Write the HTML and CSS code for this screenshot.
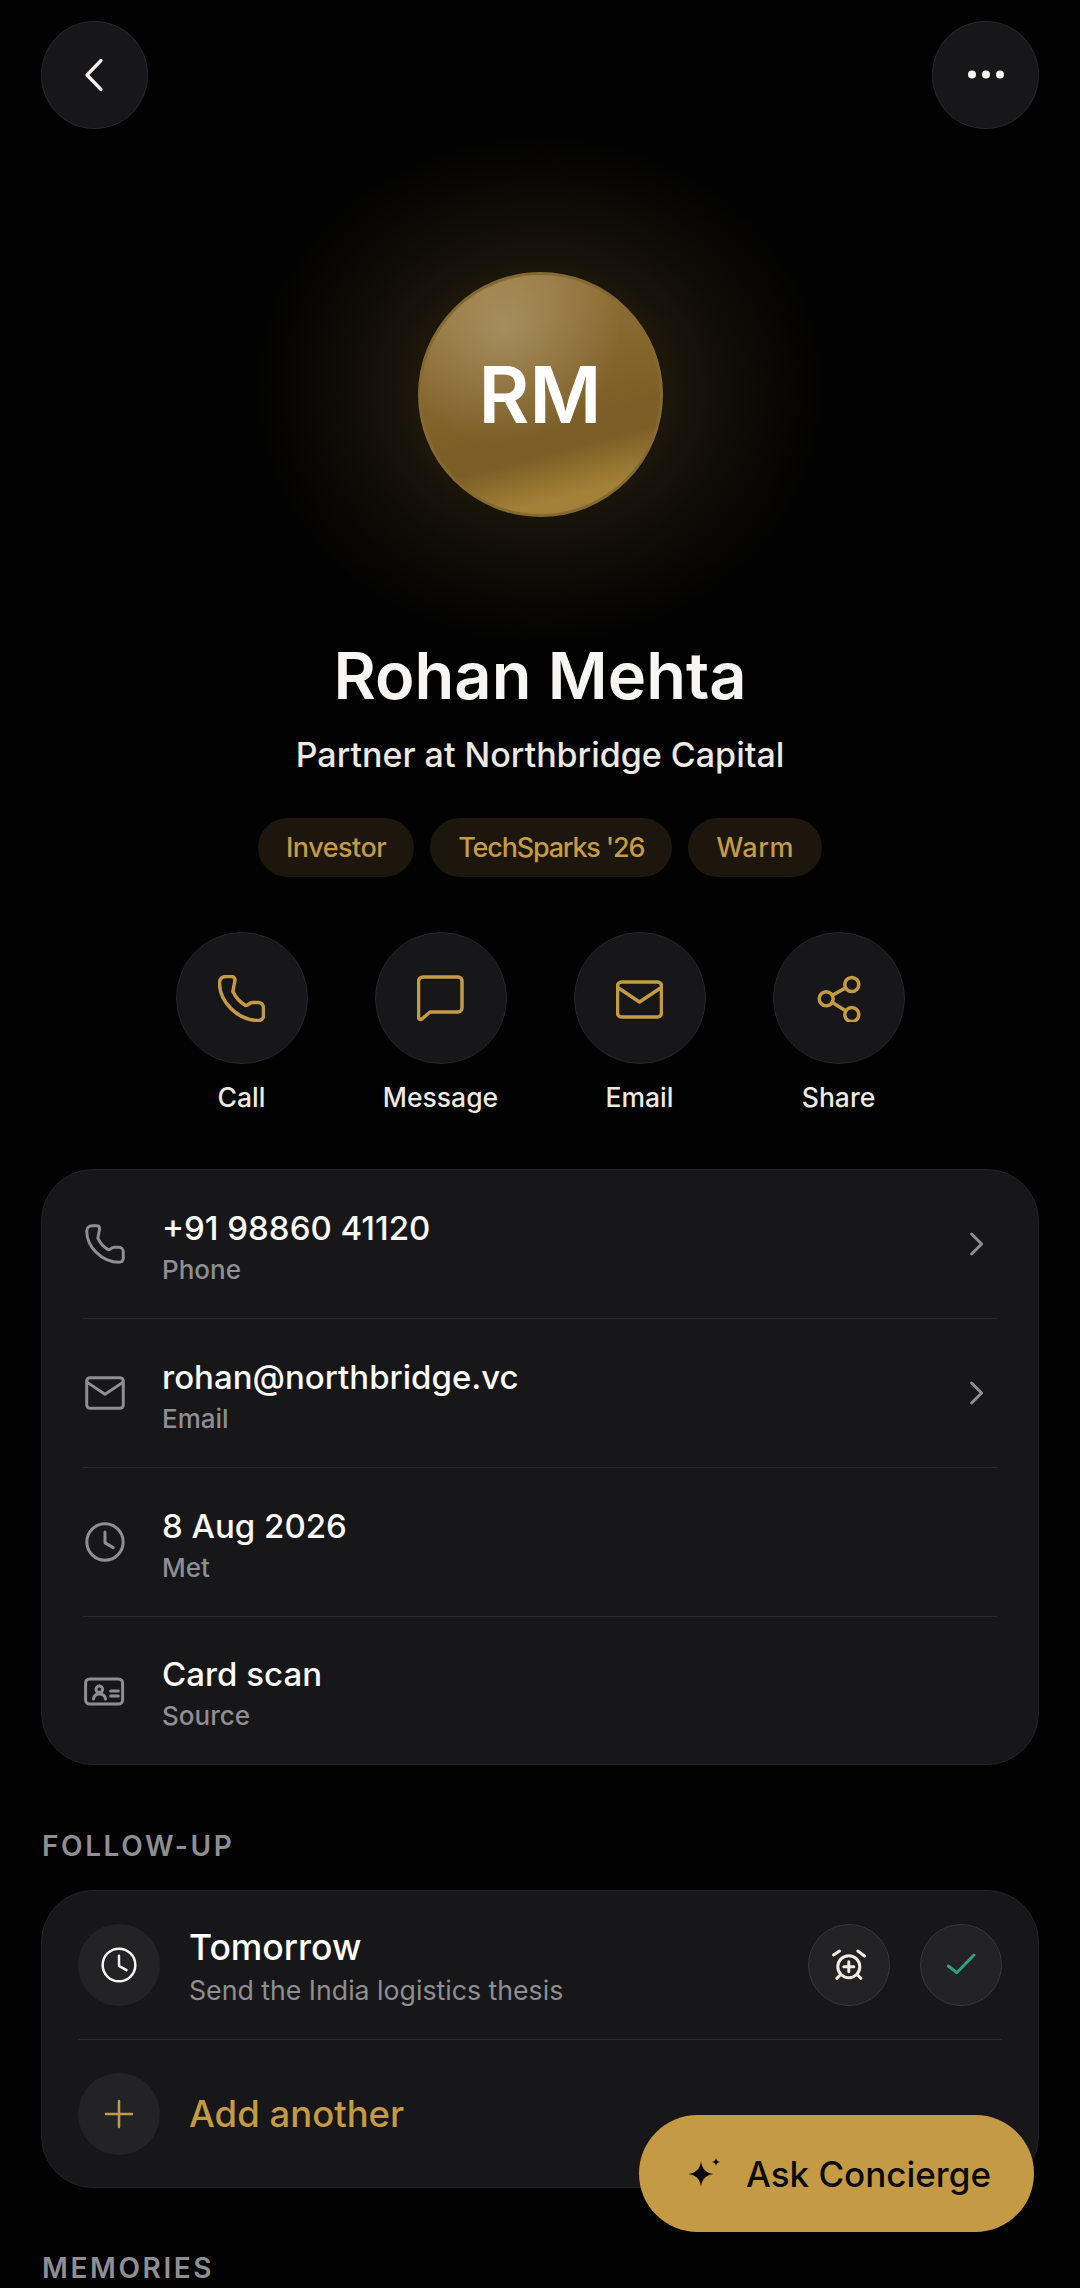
FILE: index.html
```html
<!DOCTYPE html>
<html lang="en">
<head>
  <meta charset="UTF-8" />
  <meta name="viewport" content="width=device-width, initial-scale=1.0"/>
  <title>Rohan Mehta</title>
  <link rel="stylesheet" href="styles.css">
</head>
<body>
  <div class="screen">

    <!-- Top bar -->
    <div class="topbar">
      <button class="round-btn">
        <svg width="44" height="44" viewBox="0 0 44 44" class="ico" stroke="#f5f3ee" stroke-width="3.300"><path d="M28 7.500L14 22l14 14.500"/></svg>
      </button>
      <button class="round-btn">
        <svg width="44" height="44" viewBox="0 0 44 44" fill="#f5f3ee"><circle cx="8" cy="21.500" r="4"/><circle cx="22" cy="21.500" r="4"/><circle cx="36" cy="21.500" r="4"/></svg>
      </button>
    </div>

    <!-- Profile -->
    <div class="profile">
      <div class="glow"></div>
      <div class="avatar">RM</div>
      <h1 class="name">Rohan Mehta</h1>
      <div class="role">Partner at Northbridge Capital</div>
      <div class="chips">
        <span class="chip">Investor</span>
        <span class="chip chip-wide">TechSparks '26</span>
        <span class="chip chip-warm">Warm</span>
      </div>
    </div>

    <!-- Quick actions -->
    <div class="actions">
      <div class="action">
        <div class="action-circle">
          <svg width="47" height="47" viewBox="0 0 47 47" class="ico" stroke="#c49a45" stroke-width="3.500"><path d="M1.500 8C1.500 4 4 1.500 8 1.500h5.500c2 0 3.500 1.500 3.500 3.500l-2 11q-.5 0 .5 1.500c2.500 5.500 6.500 9.500 12 13q2 0 3.500-1.500 1.500-1.500 4-1.500h5c3.500 0 5.500 2.500 5.500 5.500v7.500c0 3-2 5-5 5C20 45.500 1.500 27 1.500 8z"/></svg>
        </div>
        <div class="action-label">Call</div>
      </div>
      <div class="action">
        <div class="action-circle">
          <svg width="47" height="47" viewBox="0 0 47 47" class="ico" stroke="#c49a45" stroke-width="3.500"><path d="M6 2h35a4 4 0 0 1 4 4v27a4 4 0 0 1-4 4H13l-7.500 6.500C4 45 1.500 44.500 1.500 42V6.500A4.500 4.500 0 0 1 6 2z"/></svg>
        </div>
        <div class="action-label">Message</div>
      </div>
      <div class="action">
        <div class="action-circle">
          <svg width="47" height="47" viewBox="0 0 47 47" class="ico" stroke="#c49a45" stroke-width="3.500"><rect x="1.500" y="7" width="44" height="35" rx="4"/><path d="M2.500 13l21 14 21-14"/></svg>
        </div>
        <div class="action-label">Email</div>
      </div>
      <div class="action">
        <div class="action-circle">
          <svg width="47" height="47" viewBox="0 0 47 47" class="ico" stroke="#c49a45" stroke-width="3.500"><circle cx="36.800" cy="9.500" r="7"/><circle cx="11.200" cy="23.700" r="7"/><circle cx="36.800" cy="39.500" r="7"/><path d="M17.300 20.300l13.400-7.400M17.300 27.400l13.400 8.400"/></svg>
        </div>
        <div class="action-label">Share</div>
      </div>
    </div>

    <!-- Details -->
    <div class="card details">
      <div class="row">
        <svg width="44" height="44" viewBox="-3 -3 53 53" class="ico" stroke="#8e8e93" stroke-width="3.600"><path d="M1.500 8C1.500 4 4 1.500 8 1.500h5.500c2 0 3.500 1.500 3.500 3.500l-2 11q-.5 0 .5 1.500c2.500 5.500 6.500 9.500 12 13q2 0 3.500-1.500 1.500-1.500 4-1.500h5c3.500 0 5.500 2.500 5.500 5.500v7.500c0 3-2 5-5 5C20 45.500 1.500 27 1.500 8z"/></svg>
        <div class="row-text">
          <div class="row-title">+91 98860 41120</div>
          <div class="row-label">Phone</div>
        </div>
        <svg class="ico chev" width="30" height="30" viewBox="0 0 24 24" stroke="#8e8e93" stroke-width="2.400"><path d="M8.500 4l8 8-8 8"/></svg>
      </div>
      <div class="row">
        <svg width="44" height="44" viewBox="-3 -3 53 53" class="ico" stroke="#8e8e93" stroke-width="3.600"><rect x="1.500" y="5" width="44" height="37" rx="4"/><path d="M2.500 11l21 14 21-14"/></svg>
        <div class="row-text">
          <div class="row-title">rohan@northbridge.vc</div>
          <div class="row-label">Email</div>
        </div>
        <svg class="ico chev" width="30" height="30" viewBox="0 0 24 24" stroke="#8e8e93" stroke-width="2.400"><path d="M8.500 4l8 8-8 8"/></svg>
      </div>
      <div class="row">
        <svg width="44" height="44" viewBox="0 0 24 24" class="ico" stroke="#8e8e93" stroke-width="1.650"><circle cx="12" cy="12" r="9.900"/><path d="M12 6.500v6l4.500 2.600"/></svg>
        <div class="row-text">
          <div class="row-title">8 Aug 2026</div>
          <div class="row-label">Met</div>
        </div>
      </div>
      <div class="row">
        <svg width="44" height="44" viewBox="0 0 44 44" class="ico" stroke="#8e8e93" stroke-width="3"><rect x="2.600" y="10" width="37" height="25" rx="4"/><circle cx="16.300" cy="20.300" r="3.300"/><path d="M10.500 30c.5-3.500 3-5 6-5s5.500 1.500 6 5M27.700 22h7.600M27.700 27h7.600"/></svg>
        <div class="row-text">
          <div class="row-title">Card scan</div>
          <div class="row-label">Source</div>
        </div>
      </div>
    </div>

    <div class="section-title">FOLLOW-UP</div>

    <div class="card followup">
      <div class="fu-row fu-first">
        <div class="fu-icon">
          <svg width="40" height="40" viewBox="0 0 24 24" class="ico" stroke="#f5f3ee" stroke-width="1.500"><circle cx="12" cy="12" r="9.800"/><path d="M12 6.500v6l4.500 2.600"/></svg>
        </div>
        <div class="row-text">
          <div class="fu-title">Tomorrow</div>
          <div class="fu-sub">Send the India logistics thesis</div>
        </div>
        <div class="fu-btn">
          <svg width="36" height="36" viewBox="0 0 36 36" class="ico" stroke="#f0ece0" stroke-width="3"><circle cx="17.800" cy="19.700" r="11"/><path d="M17.800 14.700v10M12.800 19.700h10M2.500 8l6-4M26.800 4l6.700 5M5.800 31.300L9.200 28M30 31.300L26.500 28"/></svg>
        </div>
        <div class="fu-btn">
          <svg width="36" height="36" viewBox="0 0 36 36" class="ico" stroke="#2fa27a" stroke-width="3"><path d="M5.300 19l8.400 6.700L31 8"/></svg>
        </div>
      </div>
      <div class="fu-row">
        <div class="fu-icon">
          <svg width="32" height="32" viewBox="0 0 24 24" class="ico" stroke="#c49a45" stroke-width="1.900"><path d="M12 2.250v19.500M2.250 12h19.500"/></svg>
        </div>
        <div class="add-label">Add another</div>
      </div>
    </div>

    <div class="section-title memories">MEMORIES</div>

    <!-- Floating button -->
    <button class="fab">
      <svg width="56" height="56" viewBox="0 0 56 56" fill="#0a0a0a"><path d="M28 15.300C29 23 33 27 40.700 28 33 29 29 33 28 40.700 27 33 23 29 15.300 28 23 27 27 23 28 15.300z"/><path d="M43 12c.4 2.500 1.500 3.600 4 4-2.500.4-3.600 1.500-4 4-.4-2.500-1.500-3.600-4-4 2.500-.4 3.600-1.500 4-4z"/></svg>
      <span>Ask Concierge</span>
    </button>

  </div>
</body>
</html>
```

FILE: styles.css
```css
* { box-sizing: border-box; }
body {
  margin: 0;
  padding: 0;
  background: #020202;
  font-family: 'Inter', 'Noto Sans', sans-serif;
  color: #f5f3ee;
}
button {
  font-family: inherit;
  border: none;
  cursor: pointer;
}
.ico {
  fill: none;
  stroke-linecap: round;
  stroke-linejoin: round;
  display: block;
  flex-shrink: 0;
}

.screen {
  position: relative;
  width: 1080px;
  height: 2288px;
  overflow: hidden;
  padding: 21px 41px 0;
}

.topbar {
  position: relative;
  z-index: 1;
  display: flex;
  justify-content: space-between;
}
.round-btn {
  width: 107px;
  height: 108px;
  padding: 0;
  border-radius: 50%;
  background: #17171a;
  border: 1px solid #26262a;
  display: flex;
  align-items: center;
  justify-content: center;
}

.profile {
  position: relative;
  display: flex;
  flex-direction: column;
  align-items: center;
  padding-top: 143px;
}
.glow {
  position: absolute;
  left: 50%;
  top: 6px;
  width: 570px;
  height: 510px;
  margin-left: -285px;
  background: radial-gradient(closest-side, rgba(196, 154, 69, 0.15) 40%, rgba(196, 154, 69, 0.07) 68%, rgba(196, 154, 69, 0) 100%);
}
.avatar {
  position: relative;
  width: 245px;
  height: 245px;
  border-radius: 50%;
  border: 3px solid #846a32;
  background:
    radial-gradient(circle at 35% 22%, rgba(255, 255, 255, 0.22), rgba(255, 255, 255, 0) 48%),
    linear-gradient(165deg, #98773a 0%, #7c5e26 62%, #7c5e26 70%, #a28238 86%, #a08035 100%);
  display: flex;
  align-items: center;
  justify-content: center;
  font-size: 78px;
  font-weight: 600;
  color: #fff;
}
.name {
  position: relative;
  margin: 120px 0 0;
  font-size: 65px;
  line-height: 78px;
  font-weight: 600;
  color: #f8f6f2;
}
.role {
  position: relative;
  margin-top: 20px;
  font-size: 34px;
  line-height: 40px;
  font-weight: 500;
  color: #ece9e2;
}
.chips {
  display: flex;
  gap: 16px;
  margin-top: 43px;
}
.chip {
  height: 59px;
  padding: 0 28px;
  border-radius: 30px;
  background: #1c160c;
  color: #c49a45;
  font-size: 27px;
  font-weight: 500;
  letter-spacing: -0.5px;
  display: flex;
  align-items: center;
}
.chip-wide { letter-spacing: -1.2px; }
.chip-warm { letter-spacing: 0.5px; }

.actions {
  display: flex;
  justify-content: center;
  gap: 67px;
  margin-top: 55px;
}
.action {
  width: 132px;
  display: flex;
  flex-direction: column;
  align-items: center;
}
.action-circle {
  width: 132px;
  height: 132px;
  border-radius: 50%;
  background: #17171a;
  border: 1px solid #26262a;
  display: flex;
  align-items: center;
  justify-content: center;
}
.action-label {
  margin-top: 16px;
  font-size: 26.5px;
  line-height: 34px;
  font-weight: 500;
  color: #ece9e2;
  white-space: nowrap;
}

.card {
  background: #17171a;
  border: 1px solid #232327;
  border-radius: 52px;
}
.details {
  margin-top: 55px;
  padding: 0 41px;
}
.row {
  height: 149px;
  display: flex;
  align-items: center;
  border-bottom: 1px solid #2a2a2e;
}
.row:last-child {
  height: 147px;
  border-bottom: none;
}
.row-text {
  flex: 1;
  min-width: 0;
  margin-left: 35px;
  padding-top: 4px;
}
.row-title {
  font-size: 33px;
  line-height: 42px;
  font-weight: 550;
  color: #fbfaf7;
}
.row-label {
  margin-top: 5px;
  font-size: 26px;
  line-height: 32px;
  font-weight: 500;
  color: #8e8e93;
}
.chev { margin-right: 6px; }

.section-title {
  margin: 64px 0 0 1px;
  font-size: 28px;
  line-height: 34px;
  font-weight: 600;
  letter-spacing: 2.6px;
  color: #8e8e93;
}

.followup {
  margin-top: 27px;
  padding: 0 36px;
}
.fu-row {
  height: 147px;
  display: flex;
  align-items: center;
}
.fu-first {
  height: 149px;
  border-bottom: 1px solid #2a2a2e;
}
.fu-icon {
  width: 82px;
  height: 82px;
  border-radius: 50%;
  background: #232326;
  display: flex;
  align-items: center;
  justify-content: center;
}
.fu-row .row-text {
  margin-left: 29px;
  padding-top: 4px;
}
.fu-title {
  font-size: 35.5px;
  line-height: 42px;
  font-weight: 500;
  color: #fff;
}
.fu-sub {
  margin-top: 4px;
  font-size: 26.7px;
  line-height: 34px;
  color: #8e8e93;
}
.fu-btn {
  width: 82px;
  height: 82px;
  border-radius: 50%;
  background: #232326;
  border: 1px solid #38383c;
  margin-left: 30px;
  display: flex;
  align-items: center;
  justify-content: center;
}
.add-label {
  margin-left: 29px;
  font-size: 36.5px;
  font-weight: 500;
  color: #c49a45;
}

.memories { margin-top: 63px; }

.fab {
  position: absolute;
  left: 639px;
  top: 2115px;
  width: 395px;
  height: 117px;
  padding: 0 0 0 34px;
  border-radius: 59px;
  background: #c49a45;
  color: #0a0a0a;
  font-size: 35px;
  font-weight: 500;
  display: flex;
  align-items: center;
  gap: 17px;
}
```
